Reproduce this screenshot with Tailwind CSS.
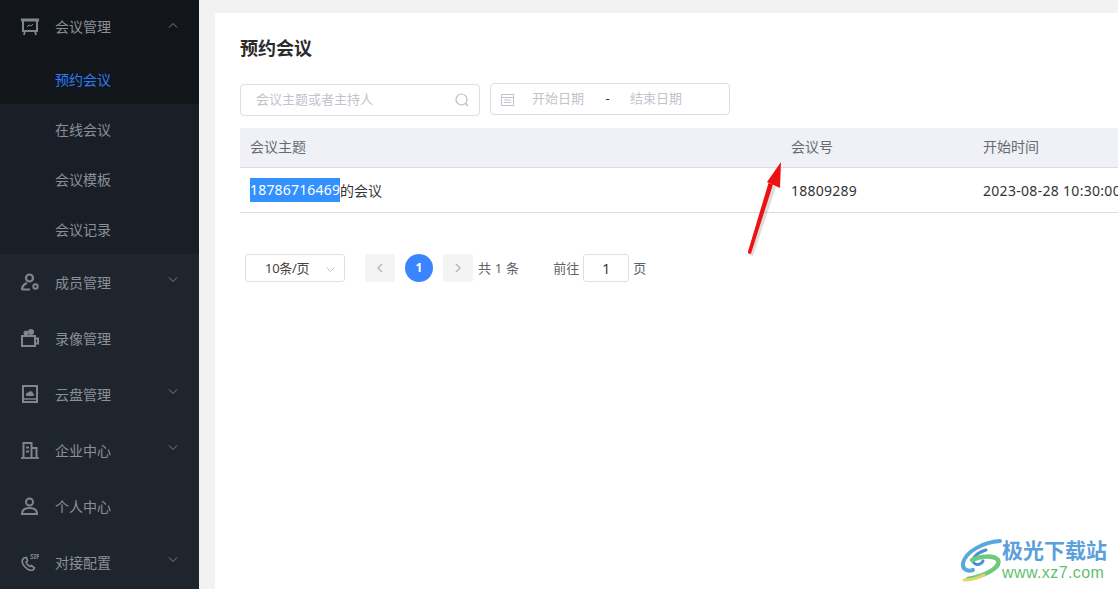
<!DOCTYPE html>
<html>
<head>
    <meta charset="utf-8">
    <title>预约会议</title>
    <script src="https://cdn.jsdelivr.net/npm/@tailwindcss/browser@4"></script>
</head>
<body class="w-[1118px] h-[589px] overflow-hidden bg-[#f2f2f2] font-['Noto_Sans','Noto_Sans_CJK_SC',sans-serif] text-[14px]">
<div class="relative flex w-[1118px] h-[589px] overflow-hidden">

    <!-- Sidebar -->
    <aside class="w-[199px] h-full shrink-0 bg-[#1f252d] text-[#8b9098]">
        <div class="bg-[#1a1e26]">
            <div class="flex items-center h-[54px] pl-[21px] pr-[21px] bg-[#12161b]">
                <svg class="w-[18px] h-[18px] mr-[16px]" viewBox="0 0 18 18" fill="none" stroke="#80868e" stroke-width="2"><path d="M0 2h18" stroke-width="3"/><path d="M2 2v11h14V2"/><path d="M4 13l-1 4M14 13l1 4" stroke-width="1.800"/><path d="M6 9l2-2 2 1 2-2" stroke-width="1"/></svg>
                <span class="flex-1 mb-[2px]">会议管理</span>
                <svg class="w-[10px] h-[6px] mb-[4px]" viewBox="0 0 10 6" fill="none" stroke="#7d8289"><path d="M1 5.500l4-4 4 4"/></svg>
            </div>
            <div class="flex items-center h-[50px] pl-[55px] bg-[#12161b] text-[#2f7bf6]">预约会议</div>
            <div class="flex items-center h-[50px] pl-[55px]">在线会议</div>
            <div class="flex items-center h-[50px] pl-[55px]">会议模板</div>
            <div class="flex items-center h-[50px] pl-[55px]">会议记录</div>
        </div>

        <div class="flex items-center h-[56px] pl-[21px] pr-[21px]">
            <svg class="w-[18px] h-[18px] mr-[16px]" viewBox="0 0 18 18" fill="none" stroke="#80868e" stroke-width="2.200"><circle cx="8.500" cy="5" r="3.500"/><path d="M1 17c0-4 2-6 5-7M1 16.500h8"/><circle cx="14.500" cy="13.500" r="2.200" stroke-width="2"/></svg>
            <span class="flex-1">成员管理</span>
            <svg class="w-[10px] h-[6px] mb-[4px]" viewBox="0 0 10 6" fill="none" stroke="#7d8289"><path d="M1 .5l4 4 4-4"/></svg>
        </div>
        <div class="flex items-center h-[56px] pl-[21px] pr-[21px]">
            <svg class="w-[18px] h-[18px] mr-[16px]" viewBox="0 0 18 18" fill="none" stroke="#80868e" stroke-width="2"><rect x="1" y="7" width="13" height="10"/><path d="M14 9.500h3v5h-3"/><circle cx="5" cy="4" r="2.500" fill="#80868e" stroke="none"/><circle cx="10" cy="3" r="3" fill="#80868e" stroke="none"/></svg>
            <span class="flex-1">录像管理</span>
        </div>
        <div class="flex items-center h-[56px] pl-[21px] pr-[21px]">
            <svg class="w-[18px] h-[18px] mr-[16px]" viewBox="0 0 18 18" fill="none" stroke="#80868e" stroke-width="2"><rect x="2" y="1" width="14" height="16"/><path d="M2 14h14" stroke-width="1.500"/><path d="M5.500 11c-1.500-2 .5-4 2-3.500 1-2 4.500-1.500 4.500 1 1.500 0 1.500 2.500 0 2.500z" fill="#80868e" stroke="none"/></svg>
            <span class="flex-1">云盘管理</span>
            <svg class="w-[10px] h-[6px] mb-[4px]" viewBox="0 0 10 6" fill="none" stroke="#7d8289"><path d="M1 .5l4 4 4-4"/></svg>
        </div>
        <div class="flex items-center h-[56px] pl-[21px] pr-[21px]">
            <svg class="w-[18px] h-[18px] mr-[16px]" viewBox="0 0 18 18" fill="none" stroke="#80868e" stroke-width="2"><path d="M0 17h18" stroke-width="1.800"/><path d="M2.500 17V2h8v15M10.500 7h5v10"/><path d="M5 6.500h3M5 10.500h3" stroke-width="1.800"/></svg>
            <span class="flex-1">企业中心</span>
            <svg class="w-[10px] h-[6px] mb-[4px]" viewBox="0 0 10 6" fill="none" stroke="#7d8289"><path d="M1 .5l4 4 4-4"/></svg>
        </div>
        <div class="flex items-center h-[56px] pl-[21px] pr-[21px]">
            <svg class="w-[18px] h-[18px] mr-[16px]" viewBox="0 0 18 18" fill="none" stroke="#80868e" stroke-width="2"><circle cx="8.500" cy="5" r="3.500"/><path d="M1 17c0-4 3-6 7.500-6s7.500 2 7.500 6z"/></svg>
            <span class="flex-1">个人中心</span>
        </div>
        <div class="flex items-center h-[56px] pl-[21px] pr-[21px]">
            <svg class="w-[18px] h-[18px] mr-[16px]" viewBox="0 0 18 18" fill="none" stroke="#80868e" stroke-width="1.700"><path d="M3 5C0 7 1 11 4 14s6 4 8 3l1.500-2-3-2.500-1.500 1C7 12.500 5.500 11 5 9l1.500-1-1-3.500z"/><text x="9" y="5.500" fill="#80868e" stroke="none" font-size="6.500" font-weight="700">SIP</text></svg>
            <span class="flex-1">对接配置</span>
            <svg class="w-[10px] h-[6px] mb-[4px]" viewBox="0 0 10 6" fill="none" stroke="#7d8289"><path d="M1 .5l4 4 4-4"/></svg>
        </div>
    </aside>

    <!-- Main card -->
    <main class="w-[903px] h-[576px] shrink-0 mt-[13px] ml-[16px] bg-white pl-[25px]">
        <h1 class="h-[24px] mt-[23px] text-[18px] leading-[24px] font-bold text-[#2b2b2b]">预约会议</h1>

        <div class="flex items-start gap-[10px] mt-[23px] h-[33px]">
            <div class="flex items-center w-[240px] h-[32px] mt-[1px] pl-[15px] pr-[10px] border border-[#dcdee6] rounded-[4px] text-[13px] text-[#c0c4cc]">
                <span class="flex-1 mb-[1px]">会议主题或者主持人</span>
                <svg class="w-[14px] h-[14px]" viewBox="0 0 14 14" fill="none" stroke="#b9bdc5" stroke-width="1.200"><circle cx="6.500" cy="6.500" r="5.500"/><path d="M10.500 10.500l2.500 2.500"/></svg>
            </div>
            <div class="flex items-center w-[240px] h-[32px] pl-[10px] border border-[#dcdee6] rounded-[4px] text-[13px] text-[#c0c4cc]">
                <svg class="w-[13px] h-[13px] mr-[18px]" viewBox="0 0 13 13" fill="none" stroke="#c0c4cc"><rect x=".5" y="1.500" width="12" height="11"/><path d="M.5 4.500h12M3 7h7M3 9.500h7"/></svg>
                <span class="w-[54px]">开始日期</span>
                <span class="w-[43px] text-center text-[#333]">-</span>
                <span class="ml-[1px]">结束日期</span>
            </div>
        </div>

        <!-- Table -->
        <div class="w-[878px] mt-[12px] text-[14px]">
            <div class="grid grid-cols-[541px_192px_1fr] items-center h-[40px] pb-[2px] bg-[#f0f1f6] border-b border-[#dcdbe6] text-[#666b73]">
                <div class="pl-[10px]">会议主题</div>
                <div class="pl-[10px]">会议号</div>
                <div class="pl-[10px]">开始时间</div>
            </div>
            <div class="grid grid-cols-[541px_192px_1fr] items-center h-[45px] border-b border-[#dcdbe6] text-[#333]">
                <div class="flex items-center pl-[10px]"><span class="h-[24px] leading-[24px] bg-[#3390ff] text-white tracking-[0.18px]">18786716469</span><span>的会议</span></div>
                <div class="pl-[10px] tracking-[0.25px]">18809289</div>
                <div class="pl-[10px] tracking-[0.3px] whitespace-nowrap">2023-08-28 10:30:00</div>
            </div>
        </div>

        <!-- Pagination -->
        <div class="flex items-center h-[30px] mt-[40px] ml-[5px] text-[13px] text-[#606266]">
            <div class="flex items-center justify-between w-[100px] h-[28px] pl-[19px] pr-[9px] border border-[#dcdfe6] rounded-[3px] text-[#444]">
                <span class="mt-[2px] tracking-[-0.3px]">10条/页</span>
                <svg class="w-[9px] h-[5px] mt-[2px]" viewBox="0 0 9 5" fill="none" stroke="#c0c4cc"><path d="M.5.5l4 4 4-4"/></svg>
            </div>
            <div class="flex items-center justify-center w-[30px] h-[28px] ml-[20px] bg-[#f4f4f5] rounded-[2px]">
                <svg class="w-[6px] h-[10px]" viewBox="0 0 6 10" fill="none" stroke="#b4b8bf" stroke-width="1.500"><path d="M5 1L1 5l4 4"/></svg>
            </div>
            <div class="flex items-center justify-center w-[28px] h-[28px] ml-[10px] rounded-full bg-[#3a84ff] text-white font-bold text-[12px]">1</div>
            <div class="flex items-center justify-center w-[30px] h-[28px] ml-[10px] bg-[#f4f4f5] rounded-[2px]">
                <svg class="w-[6px] h-[10px]" viewBox="0 0 6 10" fill="none" stroke="#b4b8bf" stroke-width="1.500"><path d="M1 1l4 4-4 4"/></svg>
            </div>
            <span class="ml-[5px] mt-[2px] tracking-[0.2px]">共 1 条</span>
            <span class="ml-[34px] mt-[2px]">前往</span>
            <div class="flex items-center justify-center w-[46px] h-[28px] ml-[4px] pt-[1px] border border-[#dcdfe6] rounded-[3px] text-[#333] text-[14px]">1</div>
            <span class="ml-[4px] mt-[2px]">页</span>
        </div>
    </main>

    <!-- Red annotation arrow -->
    <svg class="absolute left-[740px] top-[155px] w-[50px] h-[105px]" viewBox="0 0 50 105">
        <path d="M10 100L30 30l6 2L13 101z" fill="#777" fill-opacity=".25"/>
        <path d="M8 96.500L28.500 28l4.500 1.500L11 98.500c-1 1-3.500.5-3-2z" fill="#ee1111"/>
        <path d="M41 7L27 27l13 6z" fill="#ee1111"/>
    </svg>

    <!-- Watermark -->
    <div class="absolute left-[958px] top-[537px] flex items-center">
        <svg class="w-[48px] h-[46px]" viewBox="0 0 48 46" fill="none" stroke-linecap="round">
            <path d="M42 4C26 5 8 14 5 26c-1 6 4 9 10 7" stroke="#5aa6de" stroke-width="4"/>
            <path d="M28 13C18 16 13 22 16 26c3 3 8 1 9-2" stroke="#4a90d4" stroke-width="3"/>
            <path d="M14 23c8-4 22-5 26 0 3 6-9 15-30 19" stroke="#6ccb7c" stroke-width="4.500"/>
            <path d="M6 43c6 0 14-2 20-5" stroke="#e3d56a" stroke-width="3"/>
        </svg>
        <div class="-ml-[4px] whitespace-nowrap">
            <div class="text-[21px] leading-[25px] font-bold text-[#5b9fdb]">极光下载站</div>
            <div class="text-[16px] leading-[19px] text-[#63c06f] font-['Liberation_Sans',sans-serif] tracking-[0.4px]">www.xz7.com</div>
        </div>
    </div>
</div>
</body>
</html>
